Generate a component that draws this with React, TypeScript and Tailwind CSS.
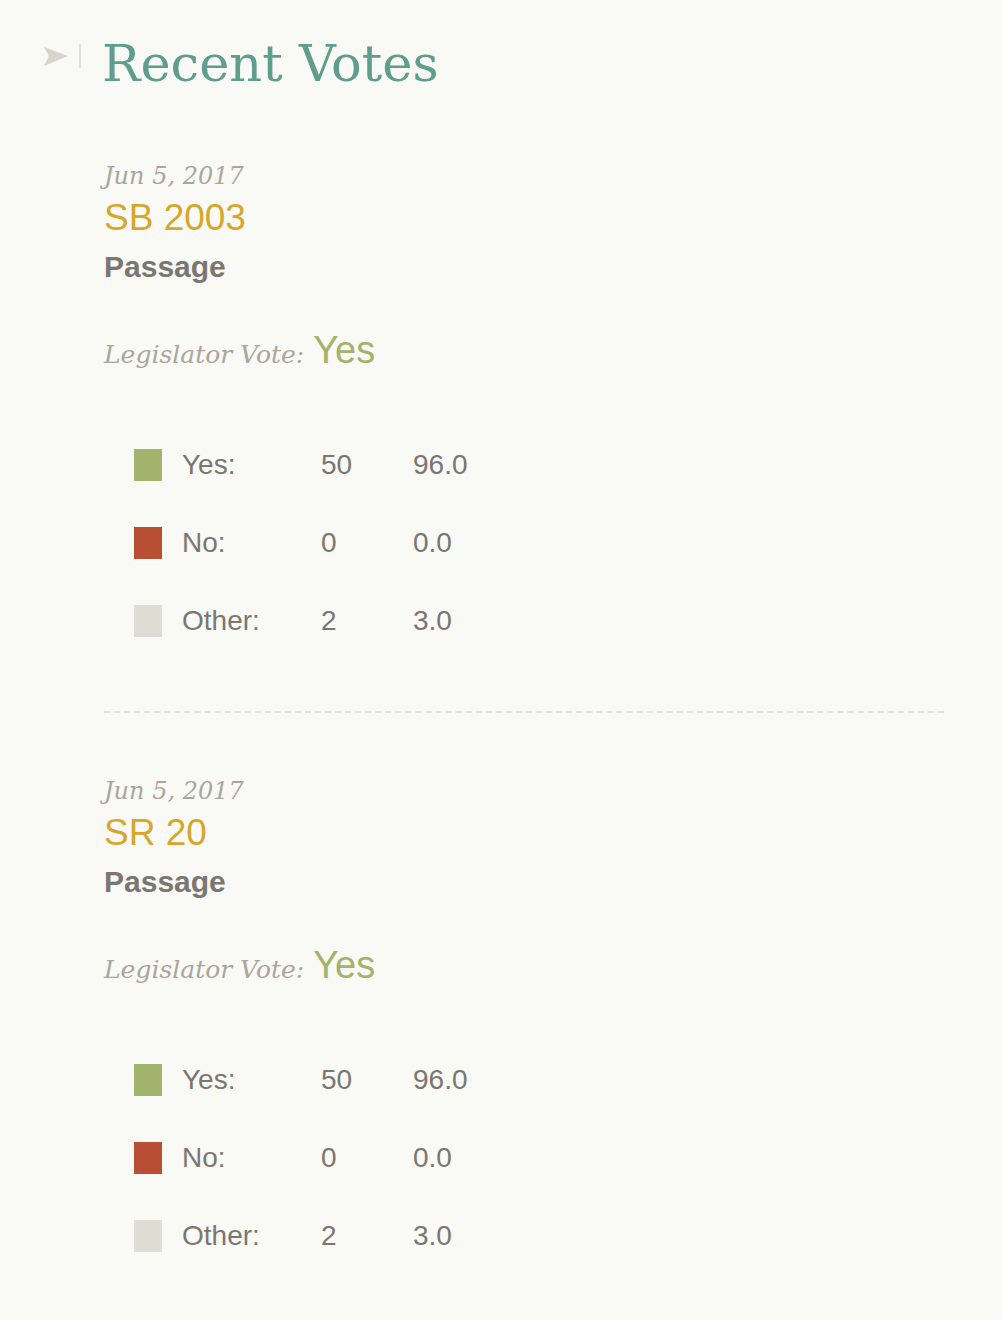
const votes = [
  { date: "Jun 5, 2017", bill: "SB 2003", motion: "Passage", vote: "Yes" },
  { date: "Jun 5, 2017", bill: "SR 20", motion: "Passage", vote: "Yes" },
];

const tally = [
  { label: "Yes:", count: "50", pct: "96.0", color: "bg-[#a3b36b]" },
  { label: "No:", count: "0", pct: "0.0", color: "bg-[#b84f35]" },
  { label: "Other:", count: "2", pct: "3.0", color: "bg-[#deddd3]" },
];

const serif = "font-['DejaVu_Serif',serif]";
const sans = "font-['Liberation_Sans',Arial,sans-serif]";

function VoteCard({ v }: { v: (typeof votes)[number] }) {
  return (
    <div>
      <p className={`${serif} italic text-[24px] leading-[30px] text-[#aaa69d]`}>{v.date}</p>
      <p className={`${sans} text-[37px] leading-[53px] text-[#d6a72b]`}>{v.bill}</p>
      <p className={`${sans} font-bold text-[30px] leading-[46px] text-[#7b7672]`}>{v.motion}</p>

      <p className="mt-[32px] flex items-baseline gap-[9px]">
        <span className={`${serif} italic text-[25px] text-[#aaa69d]`}>Legislator Vote:</span>
        <span className={`${sans} text-[38px] text-[#a3b36b]`}>{v.vote}</span>
      </p>

      <div className="mt-[70px] ml-[30px] flex flex-col gap-[46px]">
        {tally.map((t) => (
          <div key={t.label} className={`${sans} flex items-center text-[28px] leading-[32px] text-[#7b7672]`}>
            <span className={`w-[28px] h-[32px] ${t.color}`} />
            <span className="ml-[20px] w-[139px]">{t.label}</span>
            <span className="w-[92px]">{t.count}</span>
            <span>{t.pct}</span>
          </div>
        ))}
      </div>
    </div>
  );
}

export default function App() {
  return (
    <div className="min-h-[1320px] bg-[#f9f9f5] pt-[36px] pl-[43px] pr-[58px]">
      {/* heading */}
      <div className="flex items-start">
        <svg width="26" height="22" viewBox="0 0 26 22" className="mt-[10px] mr-[10px]">
          <path d="M1 1 L25 10 L1 20 L6 10 Z" fill="#d6d5cc" />
        </svg>
        <span className="mt-[8px] w-[2px] h-[24px] bg-[#e2e1d9]" />
        <h1 className={`${serif} ml-[21px] text-[51px] leading-[56px] text-[#5f9e8c]`}>Recent Votes</h1>
      </div>

      <div className="ml-[61px] mt-[69px]">
        <VoteCard v={votes[0]} />
        <div className="mt-[74px] mb-[63px] border-t-2 border-dashed border-[#e4e3da]" />
        <VoteCard v={votes[1]} />
      </div>
    </div>
  );
}
